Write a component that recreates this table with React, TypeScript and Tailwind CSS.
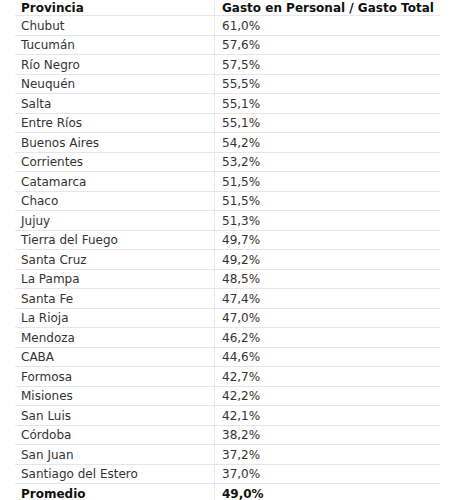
import React from "react";

const rows: [string, string][] = [
  ["Chubut", "61,0%"],
  ["Tucumán", "57,6%"],
  ["Río Negro", "57,5%"],
  ["Neuquén", "55,5%"],
  ["Salta", "55,1%"],
  ["Entre Ríos", "55,1%"],
  ["Buenos Aires", "54,2%"],
  ["Corrientes", "53,2%"],
  ["Catamarca", "51,5%"],
  ["Chaco", "51,5%"],
  ["Jujuy", "51,3%"],
  ["Tierra del Fuego", "49,7%"],
  ["Santa Cruz", "49,2%"],
  ["La Pampa", "48,5%"],
  ["Santa Fe", "47,4%"],
  ["La Rioja", "47,0%"],
  ["Mendoza", "46,2%"],
  ["CABA", "44,6%"],
  ["Formosa", "42,7%"],
  ["Misiones", "42,2%"],
  ["San Luis", "42,1%"],
  ["Córdoba", "38,2%"],
  ["San Juan", "37,2%"],
  ["Santiago del Estero", "37,0%"],
];

function Row({
  left,
  right,
  bold,
  height,
}: {
  left: string;
  right: string;
  bold?: boolean;
  height: number;
}) {
  return (
    <div
      className={`flex border-b border-[#e6e6e6] ${bold ? "font-bold text-[#111]" : "text-[#333]"}`}
      style={{ height }}
    >
      <div className="w-[200px] shrink-0 border-r border-[#e6e6e6] pl-[6px] flex items-center">
        {left}
      </div>
      <div className="flex-1 pl-[7px] flex items-center">{right}</div>
    </div>
  );
}

export default function App() {
  const pos = (k: number) => Math.round(15 + 19.5 * k);
  return (
    <div
      className="w-[455px] h-[500px] bg-white overflow-hidden text-[12px] leading-none"
      style={{ fontFamily: '"DejaVu Sans", Verdana, sans-serif' }}
    >
      <div className="ml-[15px] w-[425px]">
        <Row left="Provincia" right="Gasto en Personal / Gasto Total" bold height={16} />
        {rows.map(([a, b], i) => (
          <Row key={a} left={a} right={b} height={pos(i + 1) - pos(i)} />
        ))}
        <Row left="Promedio" right="49,0%" bold height={20} />
      </div>
    </div>
  );
}
